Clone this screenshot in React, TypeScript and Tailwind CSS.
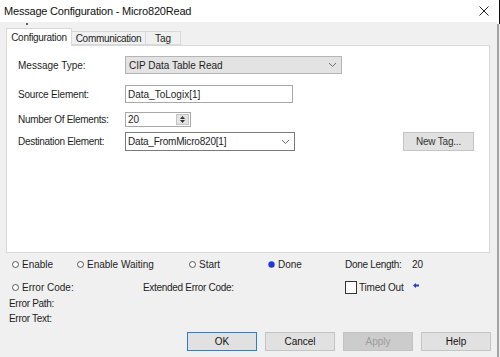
import React from "react";

function Chevron() {
    return (
        <svg width="9" height="6" viewBox="0 0 9 6" className="shrink-0">
            <polyline points="1,1 4.5,4.5 8,1" fill="none" stroke="#707070" strokeWidth="1" />
        </svg>
    );
}

function Radio({ checked }: { checked?: boolean }) {
    return (
        <svg width="7" height="7" viewBox="0 0 7 7" className="shrink-0">
            {checked ? (
                <circle cx="3.5" cy="3.5" r="3.2" fill="#1f3bd6" />
            ) : (
                <circle cx="3.5" cy="3.5" r="3" fill="#fff" stroke="#4a4a4a" strokeWidth="0.9" />
            )}
        </svg>
    );
}

function RadioItem({ label, checked, width }: { label: string; checked?: boolean; width: string }) {
    return (
        <div className={`flex items-center gap-[3px] ${width}`}>
            <Radio checked={checked} />
            <span>{label}</span>
        </div>
    );
}

const buttons = ["OK", "Cancel", "Apply", "Help"];

export default function App() {
    return (
        <div className="w-[500px] h-[357px] bg-[#f0f0f0] flex overflow-hidden font-['Liberation_Sans',Arial,sans-serif] text-[10px] text-[#1e1e1e]">
            <div className="w-[497px] flex flex-col">
                {/* title bar */}
                <div className="h-[22px] bg-white flex items-center justify-between pl-[4px] pr-[8px]">
                    <span className="text-[11px] tracking-[-0.2px] text-[#111]">Message Configuration - Micro820Read</span>
                    <svg width="10" height="10" viewBox="0 0 10 10">
                        <path d="M0.5 0.5 L9.5 9.5 M9.5 0.5 L0.5 9.5" stroke="#222" strokeWidth="1" />
                    </svg>
                </div>

                <div className="h-[6px] pl-[26px] pt-[1px]">
                    <div className="w-[2px] h-[2px] bg-[#333] rounded-full" />
                </div>

                {/* tabs */}
                <div className="h-[17px] flex items-end pl-[6px]">
                    <div className="relative z-10 -mb-px w-[66px] h-[18px] bg-white border border-b-0 border-[#d9d9d9] flex items-center justify-center tracking-[-0.3px]">
                        Configuration
                    </div>
                    <div className="w-[74px] h-[14px] border border-l-0 border-[#d9d9d9] flex items-center justify-center tracking-[-0.3px]">
                        Communication
                    </div>
                    <div className="w-[35px] h-[14px] border border-l-0 border-[#d9d9d9] flex items-center justify-center">
                        Tag
                    </div>
                </div>

                {/* panel */}
                <div className="ml-[6px] w-[484px] h-[208px] bg-white border border-[#d9d9d9] pl-[11px] pt-[10px] flex flex-col">
                    <div className="flex items-center h-[18px]">
                        <span className="w-[107px]">Message Type:</span>
                        <div className="w-[217px] h-[18px] bg-[#e3e3e3] border border-[#b5b5b5] flex items-center justify-between pl-[3px] pr-[4px]">
                            <span>CIP Data Table Read</span>
                            <Chevron />
                        </div>
                    </div>

                    <div className="flex items-center h-[18px] mt-[11px]">
                        <span className="w-[107px] tracking-[-0.2px]">Source Element:</span>
                        <div className="w-[168px] h-[18px] border border-[#a8a8a8] flex items-center pl-[2px]">
                            Data_ToLogix[1]
                        </div>
                    </div>

                    <div className="flex items-center h-[15px] mt-[9px]">
                        <span className="w-[107px] tracking-[-0.3px]">Number Of Elements:</span>
                        <div className="w-[66px] h-[15px] border border-[#a8a8a8] flex items-stretch">
                            <div className="flex-1 flex items-center pl-[2px]">20</div>
                            <div className="w-[13px] my-[1px] mr-[1px] bg-[#e3e3e3] border border-[#c4c4c4] flex flex-col items-center justify-center gap-[1px]">
                                <svg width="5" height="3" viewBox="0 0 5 3"><polygon points="2.5,0 5,3 0,3" fill="#333" /></svg>
                                <svg width="5" height="3" viewBox="0 0 5 3"><polygon points="0,0 5,0 2.5,3" fill="#333" /></svg>
                            </div>
                        </div>
                    </div>

                    <div className="flex items-center h-[19px] mt-[5px]">
                        <span className="w-[107px] tracking-[-0.3px]">Destination Element:</span>
                        <div className="w-[170px] h-[19px] border border-[#7a7a7a] flex items-center justify-between pl-[2px] pr-[4px] tracking-[-0.2px]">
                            <span>Data_FromMicro820[1]</span>
                            <Chevron />
                        </div>
                        <div className="ml-[108px] w-[71px] h-[19px] bg-[#e1e1e1] border border-[#c4c4c4] flex items-center justify-center text-[#333] tracking-[-0.2px]">
                            New Tag...
                        </div>
                    </div>
                </div>

                {/* status */}
                <div className="flex items-center h-[14px] mt-[4px] pl-[12px]">
                    <RadioItem label="Enable" width="w-[65px]" />
                    <RadioItem label="Enable Waiting" width="w-[112px]" />
                    <RadioItem label="Start" width="w-[79px]" />
                    <RadioItem label="Done" checked width="w-[77px]" />
                    <span className="w-[67px] tracking-[-0.3px]">Done Length:</span>
                    <span>20</span>
                </div>

                <div className="flex items-center h-[14px] mt-[9px] pl-[12px]">
                    <RadioItem label="Error Code:" width="w-[131px]" />
                    <span className="w-[202px] tracking-[-0.3px]">Extended Error Code:</span>
                    <div className="flex items-center gap-[2px] w-[68px]">
                        <div className="w-[12px] h-[13px] bg-white border border-[#333]" />
                        <span className="tracking-[-0.2px]">Timed Out</span>
                    </div>
                    <svg width="6" height="5" viewBox="0 0 6 5" className="-mt-[4px]">
                        <path d="M0 2.5 L3 0 L3 1.6 L6 1.6 L6 3.4 L3 3.4 L3 5 Z" fill="#1f3bd6" />
                    </svg>
                </div>

                <div className="h-[14px] mt-[2px] pl-[9px] flex items-center tracking-[-0.3px]">Error Path:</div>
                <div className="h-[14px] mt-[1px] pl-[9px] flex items-center tracking-[-0.3px]">Error Text:</div>

                <div className="flex gap-[8px] pl-[187px] mt-[7px]">
                    {buttons.map(b => (
                        <div
                            key={b}
                            className={
                                b === "OK"
                                    ? "w-[70px] h-[19px] bg-[#e1e1e1] border border-[#2a7fd4] flex items-center justify-center text-[#111]"
                                    : b === "Apply"
                                        ? "w-[70px] h-[19px] bg-[#cccccc] border border-[#c2c2c2] flex items-center justify-center text-[#9c9c9c]"
                                        : "w-[70px] h-[19px] bg-[#e1e1e1] border border-[#c4c4c4] flex items-center justify-center text-[#111]"
                            }
                        >
                            {b}
                        </div>
                    ))}
                </div>
            </div>

            {/* window edge */}
            <div className="w-[3px] flex flex-col">
                <div className="h-[24px] bg-white border-r border-[#111]" />
                <div className="flex-1 border-l-2 border-[#a3a3a3]" />
            </div>
        </div>
    );
}
